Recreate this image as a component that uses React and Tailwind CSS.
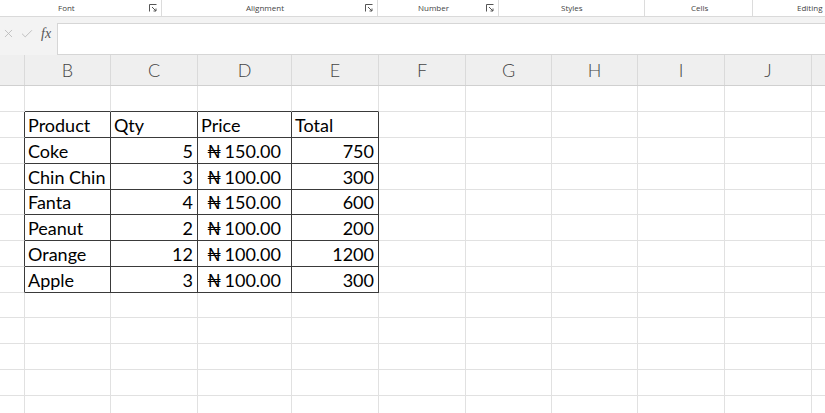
import React from "react";
import { X, Check } from "lucide-react";

const font = { fontFamily: "Lato, 'Open Sans', sans-serif" };

const groups = [
  { label: "Font", w: "w-[162px]", pad: "pl-[58px]", launcher: true },
  { label: "Alignment", w: "w-[216px]", pad: "pl-[84px]", launcher: true },
  { label: "Number", w: "w-[121px]", pad: "pl-[40px]", launcher: true },
  { label: "Styles", w: "w-[146px]", pad: "pl-[62px]", launcher: false },
  { label: "Cells", w: "w-[108px]", pad: "pl-[46px]", launcher: false },
  { label: "Editing", w: "w-[72px]", pad: "pl-[44px]", launcher: false, last: true },
];

const colWidths = [
  "w-[25px]",
  "w-[86px]",
  "w-[87px]",
  "w-[94px]",
  "w-[87px]",
  "w-[87px]",
  "w-[86px]",
  "w-[86px]",
  "w-[87px]",
  "w-[87px]",
  "w-[100px]",
];
const letters = ["", "B", "C", "D", "E", "F", "G", "H", "I", "J", ""];

const rowHeights = [
  "h-[26px]",
  "h-[26px]",
  "h-[26px]",
  "h-[26px]",
  "h-[25px]",
  "h-[26px]",
  "h-[26px]",
  "h-[26px]",
  "h-[25px]",
  "h-[26px]",
  "h-[26px]",
  "h-[26px]",
  "h-[26px]",
];

const data = [
  ["Product", "Qty", "Price", "Total"],
  ["Coke", "5", "150.00", "750"],
  ["Chin Chin", "3", "100.00", "300"],
  ["Fanta", "4", "150.00", "600"],
  ["Peanut", "2", "100.00", "200"],
  ["Orange", "12", "100.00", "1200"],
  ["Apple", "3", "100.00", "300"],
];

const Launcher = () => (
  <svg width="8" height="8" viewBox="0 0 8 8" className="ml-auto mr-[4px]">
    <path d="M0.5 7.5V0.5H7.5" fill="none" stroke="#555" strokeWidth="1" />
    <path d="M3 3L7 7M7 4.5V7H4.5" fill="none" stroke="#555" strokeWidth="1" />
  </svg>
);

const Ribbon = () => (
  <div className="flex h-[17px] bg-white border-b border-[#dadada] shadow-[0_1px_2px_rgba(0,0,0,0.08)]">
    {groups.map((g) => (
      <div
        key={g.label}
        className={`${g.w} ${g.pad} shrink-0 flex items-center text-[8px] text-[#444] ${
          g.last ? "" : "border-r border-[#dcdcdc]"
        }`}
        style={{ fontFamily: "'Open Sans', sans-serif" }}
      >
        <span>{g.label}</span>
        {g.launcher && <Launcher />}
      </div>
    ))}
  </div>
);

const FormulaBar = () => (
  <div className="flex h-[38px] pt-[6px] bg-[#f3f3f3]">
    <div className="w-[57px] shrink-0 flex items-start pt-[4px] pl-[2px] gap-[5px]">
      <X className="w-[13px] h-[13px] text-[#b8b8b8]" strokeWidth={1.5} />
      <Check className="w-[14px] h-[14px] text-[#b8b8b8]" strokeWidth={1.5} />
      <span
        className="italic text-[14px] leading-[14px] text-[#555] ml-[2px]"
        style={{ fontFamily: "'Liberation Serif', serif" }}
      >
        fx
      </span>
    </div>
    <div className="flex-1 bg-white border border-[#d6d6d6] border-r-0" />
  </div>
);

const HeaderRow = () => (
  <div className="flex h-[31px] bg-[#efefef] border-b border-[#d0d0d0]">
    {colWidths.map((w, i) => (
      <div
        key={i}
        className={`${w} shrink-0 flex items-center justify-center text-[18px] text-[#444] font-light border-r border-[#dadada]`}
        style={font}
      >
        {letters[i]}
      </div>
    ))}
  </div>
);

const Cell = ({ r, c }) => {
  const inTable = r >= 1 && r <= 7;
  const dataRow = inTable ? data[r - 1] : null;
  const darkRight = inTable && c >= 0 && c <= 4;
  const darkBottom = r <= 7 && c >= 1 && c <= 4;
  const br = darkRight ? "border-r-[#3a3a3a]" : "border-r-[#e1e1e1]";
  const bb = darkBottom ? "border-b-[#3a3a3a]" : "border-b-[#e1e1e1]";
  let content = null;
  if (dataRow && c >= 1 && c <= 4) {
    const v = dataRow[c - 1];
    const header = r === 1;
    if (c === 1 || header) {
      content = <span className="pl-[3px]">{v}</span>;
    } else if (c === 3) {
      content = (
        <div className="flex w-full justify-between pl-[9px] pr-[10px]">
          <span>₦</span>
          <span>{v}</span>
        </div>
      );
    } else {
      content = <span className="ml-auto pr-[4px]">{v}</span>;
    }
  }
  return (
    <div
      className={`${colWidths[c]} shrink-0 flex items-end pb-[1px] border-r border-b ${br} ${bb} text-[18px] leading-[22px] text-black`}
      style={font}
    >
      {content}
    </div>
  );
};

export default function App() {
  return (
    <div className="w-[825px] h-[413px] overflow-hidden bg-white">
      <Ribbon />
      <FormulaBar />
      <HeaderRow />
      {rowHeights.map((h, r) => (
        <div key={r} className={`flex ${h}`}>
          {colWidths.map((_, c) => (
            <Cell key={c} r={r} c={c} />
          ))}
        </div>
      ))}
    </div>
  );
}
